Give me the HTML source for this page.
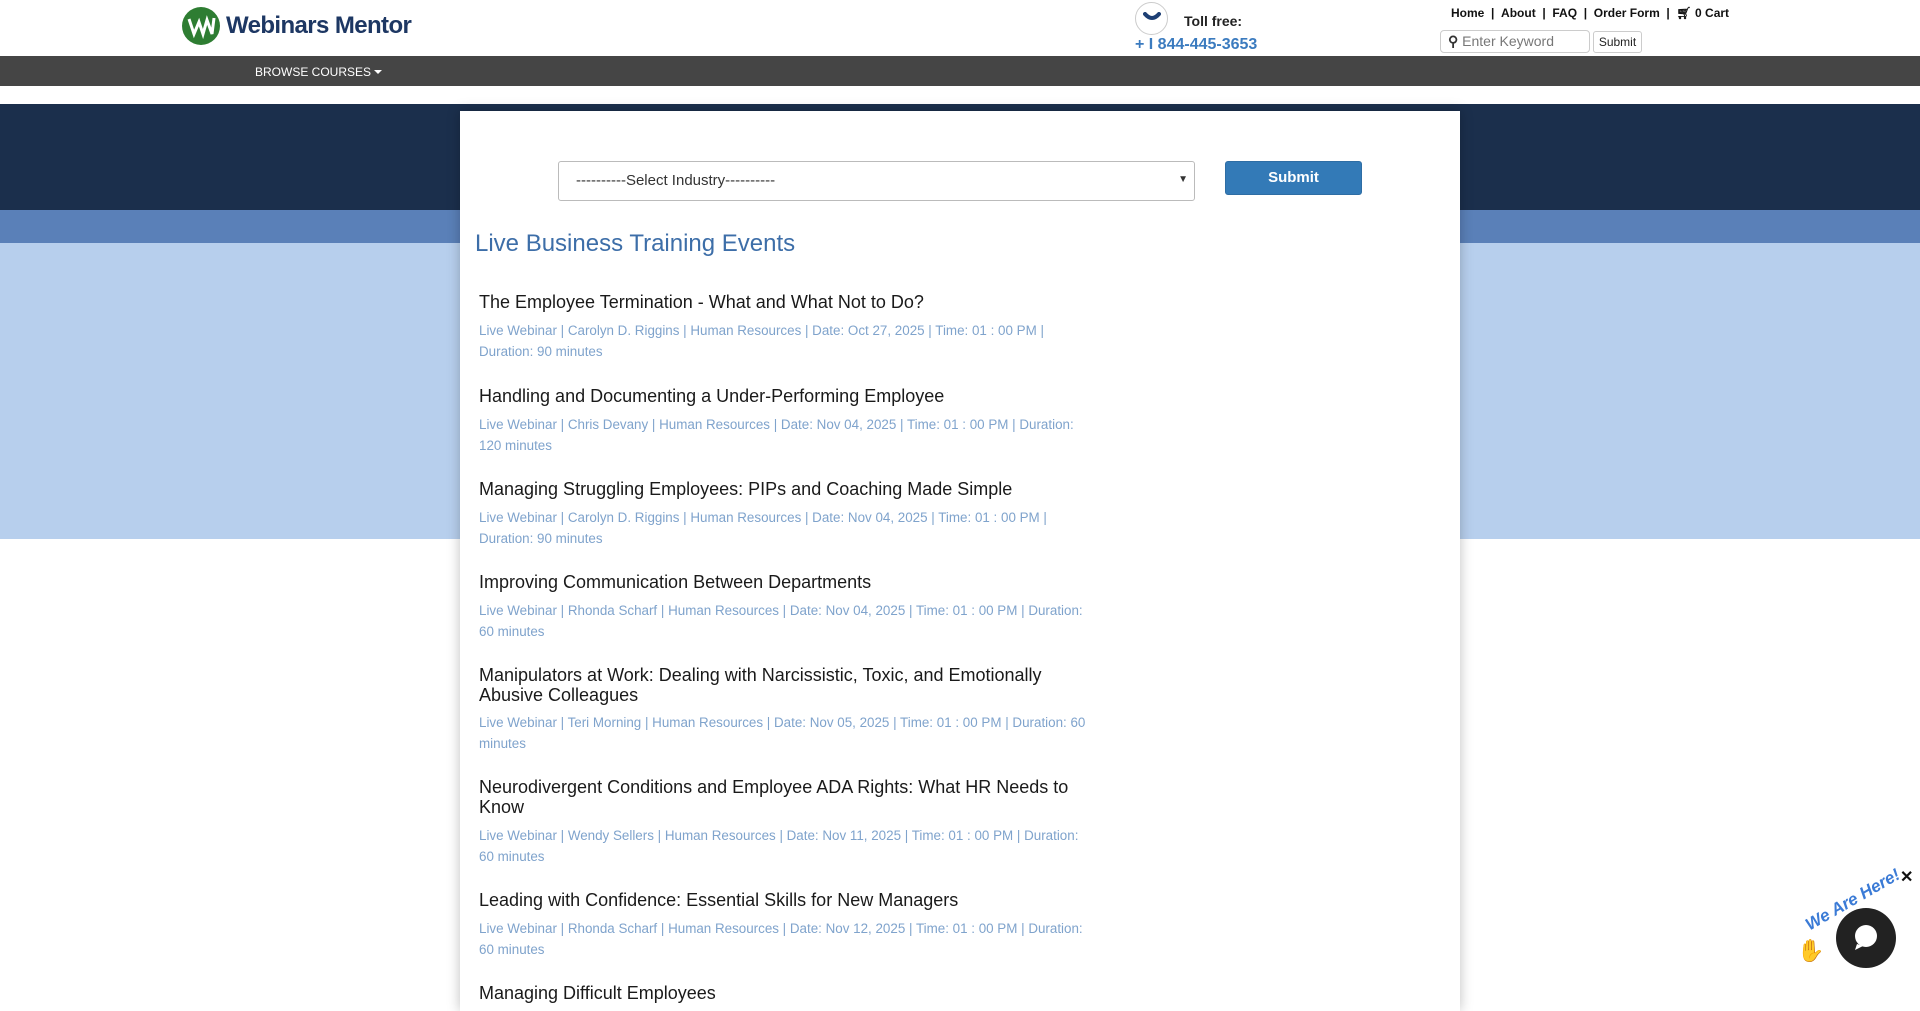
<!DOCTYPE html>
<html><head><meta charset="utf-8"><style>
*{margin:0;padding:0;box-sizing:border-box}
body{width:1920px;height:993px;overflow:hidden;background:#fff;font-family:"Liberation Sans",sans-serif;position:relative}
.a{position:absolute}
.t{position:absolute;left:479px;white-space:nowrap;font-size:18px;color:#1a1a1a;line-height:20px}
.m{position:absolute;left:479px;white-space:nowrap;font-size:13.4px;color:#7fa3cc;line-height:21px}
</style></head><body>
<div class="a" style="left:0;top:56px;width:1920px;height:30px;background:#454545"></div>
<div class="a" style="left:255px;top:65px;color:#fff;font-size:12px">BROWSE COURSES <span style="display:inline-block;border-left:4px solid transparent;border-right:4px solid transparent;border-top:4px solid #fff;vertical-align:2px"></span></div>
<div class="a" style="left:0;top:104px;width:1920px;height:106px;background:#1b2f4c"></div>
<div class="a" style="left:0;top:210px;width:1920px;height:33px;background:#5a80b8"></div>
<div class="a" style="left:0;top:243px;width:1920px;height:296px;background:#b7cfed"></div>
<!-- logo -->
<svg class="a" style="left:181px;top:6px" width="40" height="40" viewBox="0 0 40 40"><circle cx="20" cy="20" r="19" fill="#2e7d32"/><path d="M8 13 L13 28 L18 16 L22 28 L26 14 L31 28 L33 12" stroke="#fff" stroke-width="3" fill="none"/></svg>
<div class="a" style="left:226px;top:12px;font-size:24px;color:#1d3763;font-weight:bold;letter-spacing:-0.6px">Webinars Mentor</div>
<!-- phone -->
<div class="a" style="left:1135px;top:2px;width:33px;height:33px;border-radius:50%;border:1px solid #ccc;background:#fff"></div>
<svg class="a" style="left:1143px;top:12px" width="18" height="10"><path d="M2 2 Q9 10 16 2" stroke="#1d3f74" stroke-width="4" fill="none" stroke-linecap="round"/></svg>
<div class="a" style="left:1184px;top:13px;font-size:14px;font-weight:bold;color:#222">Toll free:</div>
<div class="a" style="left:1135px;top:36px;font-size:16px;font-weight:bold;color:#3b7bbf">+ I 844-445-3653</div>
<div class="a" style="left:1451px;top:6px;font-size:12px;font-weight:bold;color:#111;white-space:nowrap">Home &nbsp;| &nbsp;About &nbsp;| &nbsp;FAQ &nbsp;| &nbsp;Order Form &nbsp;| &nbsp;&#128722;&#xFE0E; 0 Cart</div>
<div class="a" style="left:1440px;top:30px;width:150px;height:23px;border:1px solid #ccc;border-radius:4px;font-size:14px;color:#777;padding:2px 0 0 7px"><b style="color:#333">&#9906;</b> Enter Keyword</div>
<div class="a" style="left:1593px;top:31px;width:49px;height:22px;border:1px solid #ccc;border-radius:3px;font-size:12px;color:#222;text-align:center;line-height:20px">Submit</div>
<!-- card -->
<div class="a" style="left:460px;top:111px;width:1000px;height:900px;background:#fff;box-shadow:0 0 12px rgba(0,0,0,.25)"></div>
<div class="a" style="left:558px;top:161px;width:637px;height:40px;border:1px solid #bbb;border-radius:3px;font-size:15px;color:#333;padding:10px 0 0 17px">----------Select Industry----------<span style="position:absolute;right:6px;top:12px;font-size:10px">&#9660;</span></div>
<div class="a" style="left:1225px;top:161px;width:137px;height:34px;background:#337ab7;border:1px solid #2e6da4;border-radius:3px;color:#fff;font-size:15px;font-weight:bold;text-align:center;line-height:32px">Submit</div>
<div class="a" style="left:475px;top:230px;font-size:24px;color:#3d6ea8">Live Business Training Events</div>

<div class="t" style="top:292px">The Employee Termination - What and What Not to Do?</div>
<div class="m" style="top:320px">Live Webinar | Carolyn D. Riggins | Human Resources | Date: Oct 27, 2025 | Time: 01 : 00 PM |<br>Duration: 90 minutes</div>
<div class="t" style="top:386px">Handling and Documenting a Under-Performing Employee</div>
<div class="m" style="top:414px">Live Webinar | Chris Devany | Human Resources | Date: Nov 04, 2025 | Time: 01 : 00 PM | Duration:<br>120 minutes</div>
<div class="t" style="top:479px">Managing Struggling Employees: PIPs and Coaching Made Simple</div>
<div class="m" style="top:507px">Live Webinar | Carolyn D. Riggins | Human Resources | Date: Nov 04, 2025 | Time: 01 : 00 PM |<br>Duration: 90 minutes</div>
<div class="t" style="top:572px">Improving Communication Between Departments</div>
<div class="m" style="top:600px">Live Webinar | Rhonda Scharf | Human Resources | Date: Nov 04, 2025 | Time: 01 : 00 PM | Duration:<br>60 minutes</div>
<div class="t" style="top:665px">Manipulators at Work: Dealing with Narcissistic, Toxic, and Emotionally<br>Abusive Colleagues</div>
<div class="m" style="top:712px">Live Webinar | Teri Morning | Human Resources | Date: Nov 05, 2025 | Time: 01 : 00 PM | Duration: 60<br>minutes</div>
<div class="t" style="top:777px">Neurodivergent Conditions and Employee ADA Rights: What HR Needs to<br>Know</div>
<div class="m" style="top:825px">Live Webinar | Wendy Sellers | Human Resources | Date: Nov 11, 2025 | Time: 01 : 00 PM | Duration:<br>60 minutes</div>
<div class="t" style="top:890px">Leading with Confidence: Essential Skills for New Managers</div>
<div class="m" style="top:918px">Live Webinar | Rhonda Scharf | Human Resources | Date: Nov 12, 2025 | Time: 01 : 00 PM | Duration:<br>60 minutes</div>
<div class="t" style="top:983px">Managing Difficult Employees</div>

<!-- chat -->
<div class="a" style="left:1800px;top:890px;font-size:17px;font-weight:bold;font-style:italic;color:#3b7bd6;transform:rotate(-30deg)">We Are Here!</div>
<div class="a" style="left:1797px;top:938px;font-size:22px">&#9995;</div>
<div class="a" style="left:1836px;top:908px;width:60px;height:60px;border-radius:50%;background:#222"></div>
<svg class="a" style="left:1851px;top:922px" width="30" height="30"><circle cx="15" cy="14" r="11" fill="#fff"/><path d="M6 22 L4 28 L12 24Z" fill="#fff"/></svg>
<div class="a" style="left:1900px;top:867px;font-size:16px;font-weight:bold;color:#111">&#10005;</div>
</body></html>
